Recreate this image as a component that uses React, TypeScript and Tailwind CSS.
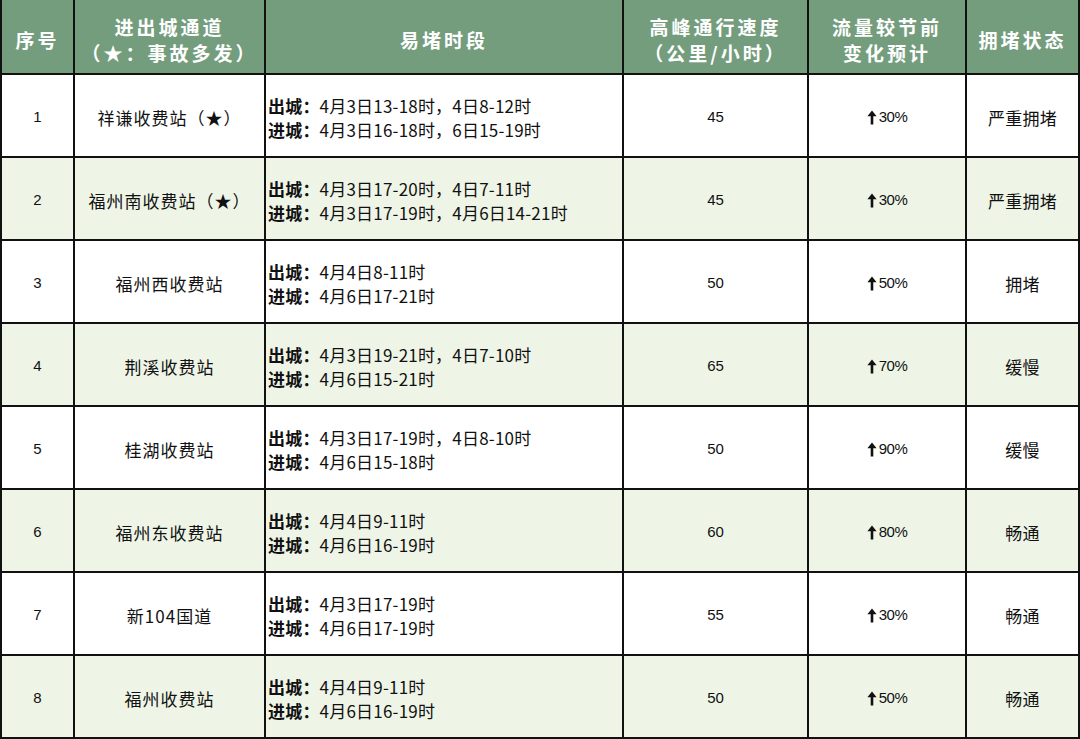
import React from "react";

type Row = {
  id: number;
  name: string;
  out: string;
  into: string;
  speed: number;
  change: string;
  status: string;
};

const rows: Row[] = [
  { id: 1, name: "祥谦收费站（★）", out: "4月3日13-18时，4日8-12时", into: "4月3日16-18时，6日15-19时", speed: 45, change: "30%", status: "严重拥堵" },
  { id: 2, name: "福州南收费站（★）", out: "4月3日17-20时，4日7-11时", into: "4月3日17-19时，4月6日14-21时", speed: 45, change: "30%", status: "严重拥堵" },
  { id: 3, name: "福州西收费站", out: "4月4日8-11时", into: "4月6日17-21时", speed: 50, change: "50%", status: "拥堵" },
  { id: 4, name: "荆溪收费站", out: "4月3日19-21时，4日7-10时", into: "4月6日15-21时", speed: 65, change: "70%", status: "缓慢" },
  { id: 5, name: "桂湖收费站", out: "4月3日17-19时，4日8-10时", into: "4月6日15-18时", speed: 50, change: "90%", status: "缓慢" },
  { id: 6, name: "福州东收费站", out: "4月4日9-11时", into: "4月6日16-19时", speed: 60, change: "80%", status: "畅通" },
  { id: 7, name: "新104国道", out: "4月3日17-19时", into: "4月6日17-19时", speed: 55, change: "30%", status: "畅通" },
  { id: 8, name: "福州收费站", out: "4月4日9-11时", into: "4月6日16-19时", speed: 50, change: "50%", status: "畅通" },
];

const cjk = "font-['Noto_Sans_CJK_SC','Noto_Sans',sans-serif]";
const latin = "font-['Liberation_Sans','Noto_Sans_CJK_SC',sans-serif]";

function UpArrow() {
  return (
    <svg width="10" height="15" viewBox="0 0 10 15" className="mr-[2px]">
      <path d="M5 0.5 L9.6 6.2 L6.3 6.2 L6.3 14.5 L3.7 14.5 L3.7 6.2 L0.4 6.2 Z" fill="#111" />
    </svg>
  );
}

function HeadCell({ children }: { children: React.ReactNode }) {
  return (
    <div className="bg-[#749d7e] text-white font-bold text-[19px] leading-[26px] pt-[6px] flex flex-col items-center justify-center text-center tracking-[3px]">
      {children}
    </div>
  );
}

export default function App() {
  return (
    <div className={`w-[1080px] h-[739px] bg-[#111] px-[2px] pb-[2px] overflow-hidden ${cjk}`}>
      <div className="grid grid-cols-[71px_189px_356px_183px_156px_111px] grid-rows-[73px_repeat(8,81px)] gap-[2px]">
        {/* Header */}
        <HeadCell>序号</HeadCell>
        <HeadCell>
          <span>进出城通道</span>
          <span>（★：事故多发）</span>
        </HeadCell>
        <HeadCell>易堵时段</HeadCell>
        <HeadCell>
          <span>高峰通行速度</span>
          <span>（公里/小时）</span>
        </HeadCell>
        <HeadCell>
          <span>流量较节前</span>
          <span>变化预计</span>
        </HeadCell>
        <HeadCell>拥堵状态</HeadCell>

        {/* Body rows */}
        {rows.map((r) => {
          const bg = r.id % 2 === 0 ? "bg-[#eef5e7]" : "bg-white";
          return (
            <React.Fragment key={r.id}>
              <div className={`${bg} ${latin} text-[15px] text-[#111] pt-[4px] flex items-center justify-center`}>
                {r.id}
              </div>
              <div className={`${bg} text-[17px] text-[#111] tracking-[1px] pt-[4px] flex items-center justify-center`}>
                {r.name}
              </div>
              <div className={`${bg} text-[17px] leading-[24px] text-[#111] pt-[4px] flex flex-col justify-center pl-[2px] tracking-[0.2px]`}>
                <div>
                  <span className="font-bold">出城：</span>
                  {r.out}
                </div>
                <div>
                  <span className="font-bold">进城：</span>
                  {r.into}
                </div>
              </div>
              <div className={`${bg} ${latin} text-[15px] text-[#111] pt-[4px] flex items-center justify-center`}>
                {r.speed}
              </div>
              <div className={`${bg} ${latin} text-[15px] text-[#111] tracking-[-0.5px] pt-[4px] flex items-center justify-center`}>
                <UpArrow />
                {r.change}
              </div>
              <div className={`${bg} text-[17px] text-[#111] tracking-[0.3px] pt-[4px] flex items-center justify-center`}>
                {r.status}
              </div>
            </React.Fragment>
          );
        })}
      </div>
    </div>
  );
}
